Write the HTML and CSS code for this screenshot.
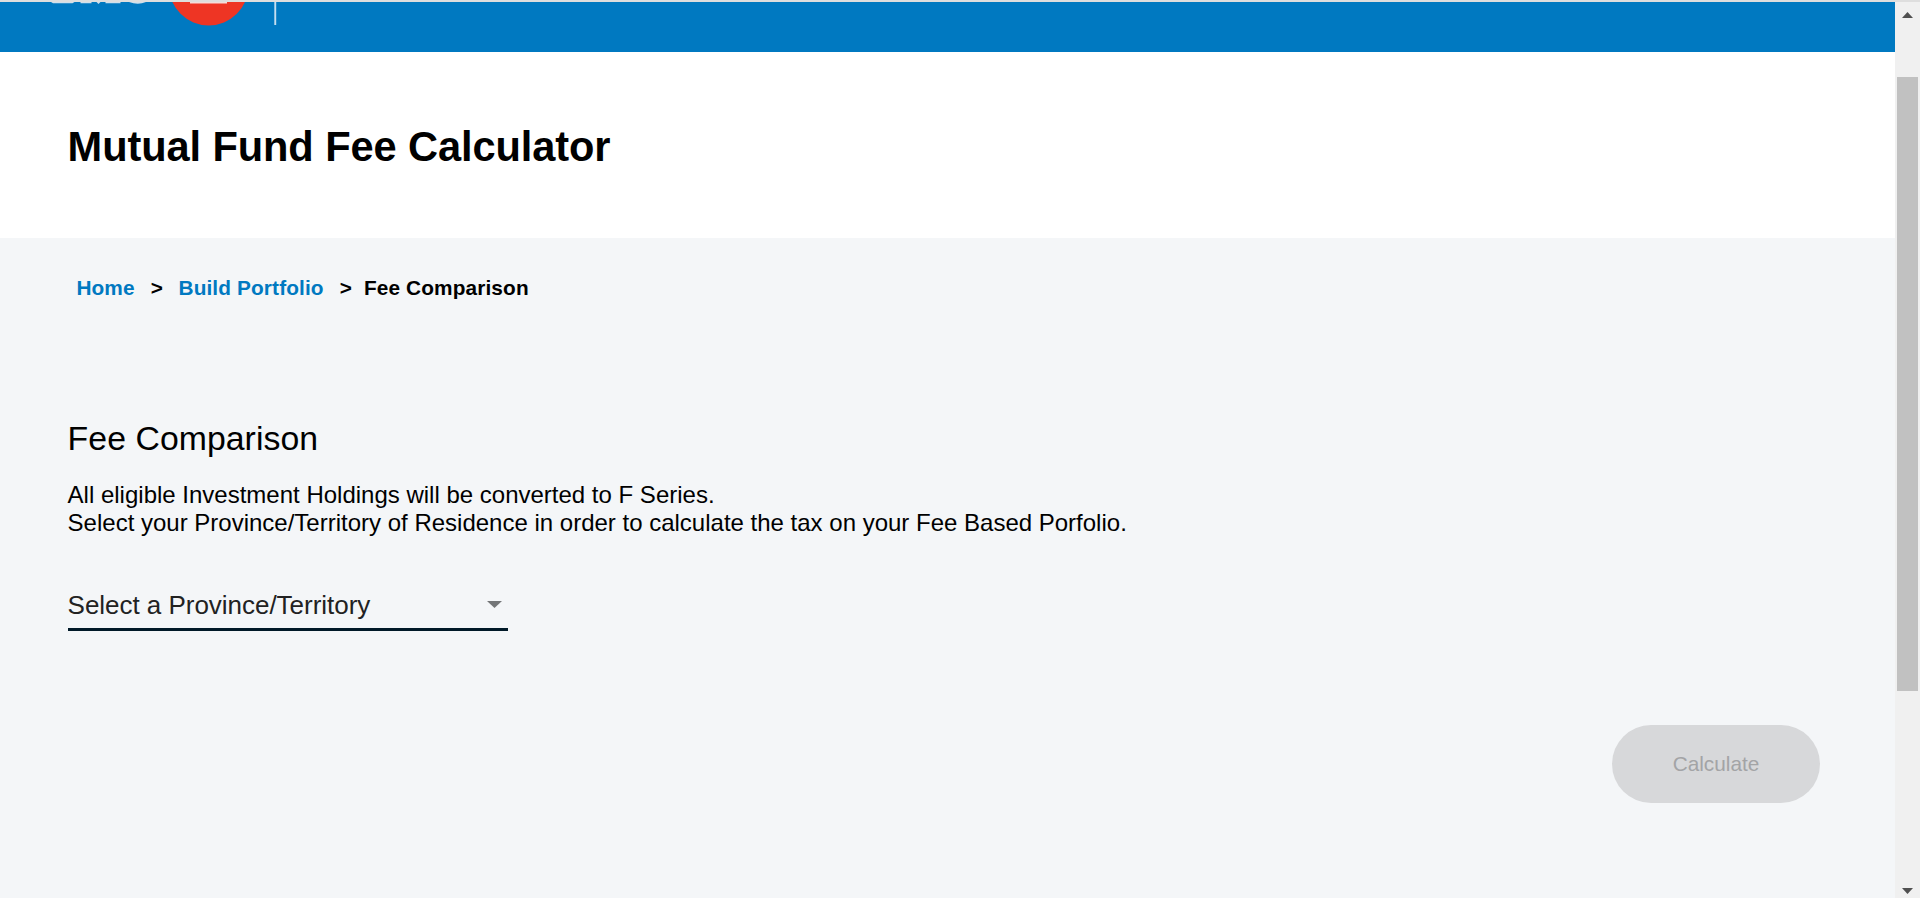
FILE: index.html
```
<!DOCTYPE html>
<html lang="en">
<head>
<meta charset="utf-8">
<title>Mutual Fund Fee Calculator</title>
<link rel="stylesheet" href="styles.css">
</head>
<body>
<div class="window">
  <div class="page">
    <header class="topbar">
      <svg class="logo" width="290" height="24" viewBox="0 2 290 24" aria-hidden="true">
        <g fill="#cfe0ec">
          <path d="M51 2h23.500l-2 1.300h-19.500zM80.500 2h11v1.300h-11zM96.500 2h4l-2 2zM105.500 2h15v1.300h-15zM129 2h17q-8 3.600-17 0z"/>
        </g>
        <circle cx="208.700" cy="-14.300" r="39.800" fill="#ee3524"/>
        <path d="M190 2h37v1.500h-37z" fill="#f3dcd9"/>
        <path d="M274.300 2h1.900v23h-1.900z" fill="#c4def0"/>
      </svg>
    </header>
    <div class="title-band"><h1 class="title">Mutual Fund Fee Calculator</h1></div>
    <main class="content">
      <nav class="crumbs">
        <a class="crumb-link">Home</a><span class="sep">&gt;</span><a class="crumb-link">Build Portfolio</a><span class="sep last">&gt;</span><span>Fee Comparison</span>
      </nav>
      <h2 class="heading">Fee Comparison</h2>
      <p class="intro">All eligible Investment Holdings will be converted to F Series.<br>Select your Province/Territory of Residence in order to calculate the tax on your Fee Based Porfolio.</p>
      <div class="select"><span>Select a Province/Territory</span><svg width="15" height="7" viewBox="0 0 15 7"><path d="M0 0h15L7.500 7z" fill="#747678"/></svg></div>
      <div class="actions"><button class="calculate" disabled>Calculate</button></div>
    </main>
  </div>
  <div class="scrollbar">
    <svg width="11" height="6" viewBox="0 0 11 6"><path d="M5.500 0L11 6H0z" fill="#505050"/></svg>
    <div class="thumb"></div>
    <svg class="down" width="11" height="6" viewBox="0 0 11 6"><path d="M0 0h11L5.500 6z" fill="#505050"/></svg>
  </div>
</div>
</body>
</html>
```
FILE: styles.css
```
* { box-sizing: border-box; }
body { margin: 0; font-family: "Liberation Sans", Arial, sans-serif; color: #000; overflow: hidden; }
.window { display: flex; height: 898px; border-top: 2px solid #dedede; }
.page { flex: 1; display: flex; flex-direction: column; background: #f4f6f8; }
.topbar { height: 50px; background: #0079c1; }
.logo { display: block; }
.title-band { height: 186px; padding: 71px 67.6px 0; background: #fff; }
.title { margin: 0; font-size: 41.6px; line-height: 48px; letter-spacing: -0.1px; white-space: nowrap; }
.content { flex: 1; padding: 0 75px 0 67.6px; }
.crumbs { display: flex; padding: 38px 0 0 8.8px; font-size: 20.8px; line-height: 24px; font-weight: bold; letter-spacing: 0.13px; }
.crumb-link { color: #0079c1; }
.sep { margin: 0 15.5px 0 16px; }
.sep.last { margin-right: 12px; }
.heading { margin: 118px 0 0; font-size: 33.8px; line-height: 40px; font-weight: normal; letter-spacing: 0.05px; }
.intro { margin: 23px 0 0; font-size: 24px; line-height: 28px; white-space: nowrap; }
.select { display: flex; justify-content: space-between; align-items: center; width: 440px; height: 53px; margin-top: 41px; padding: 3px 6px 0 0; border-bottom: 3px solid #001928; color: #222; font-size: 26px; line-height: 30px; letter-spacing: -0.03px; }
.actions { display: flex; justify-content: flex-end; margin-top: 94px; }
.calculate { width: 208px; height: 78px; padding: 0; border: 0; border-radius: 39px; background: #d7d8da; color: #a3a4a6; font: 20.8px "Liberation Sans", Arial, sans-serif; }
.scrollbar { display: flex; flex-direction: column; align-items: center; width: 25px; padding: 10px 0 4px; background: #f0f0f0; }
.thumb { width: 21px; height: 614px; margin-top: 59px; background: #c1c1c1; }
.down { margin-top: auto; }
```
